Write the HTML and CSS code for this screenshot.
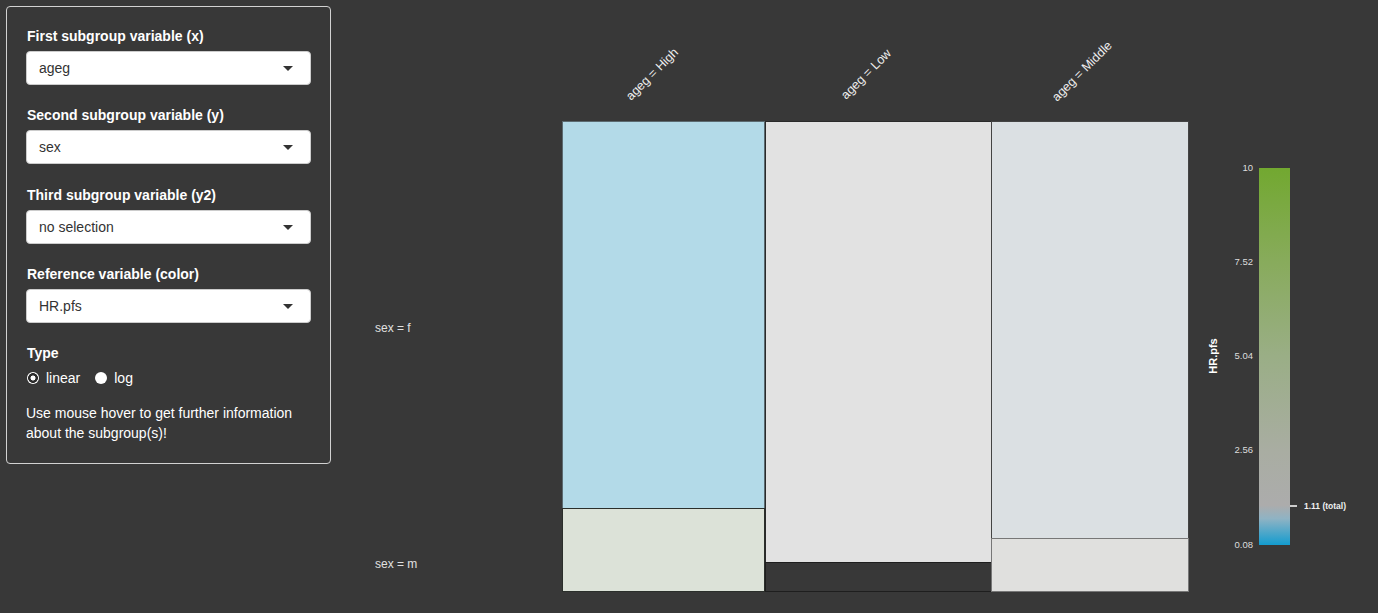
FILE: index.html
```html
<!DOCTYPE html>
<html>
<head>
<meta charset="utf-8">
<link rel="stylesheet" href="styles.css">
</head>
<body>
<div class="page">
  <aside class="panel">
    <div class="group">
      <div class="label">First subgroup variable (x)</div>
      <div class="select"><span>ageg</span><i class="caret"></i></div>
    </div>
    <div class="group group-wide">
      <div class="label">Second subgroup variable (y)</div>
      <div class="select"><span>sex</span><i class="caret"></i></div>
    </div>
    <div class="group">
      <div class="label">Third subgroup variable (y2)</div>
      <div class="select"><span>no selection</span><i class="caret"></i></div>
    </div>
    <div class="group">
      <div class="label">Reference variable (color)</div>
      <div class="select"><span>HR.pfs</span><i class="caret"></i></div>
    </div>
    <div class="group group-last">
      <div class="label">Type</div>
      <div class="radios">
        <label class="radio"><span class="dot checked"></span>linear</label>
        <label class="radio"><span class="dot"></span>log</label>
      </div>
    </div>
    <p class="help">Use mouse hover to get further information about the subgroup(s)!</p>
  </aside>
  <main class="plot">
    <svg class="chart" width="1040" height="613" viewBox="338 0 1040 613" xmlns="http://www.w3.org/2000/svg">
      <defs>
        <linearGradient id="lg" x1="0" y1="0" x2="0" y2="1">
          <stop offset="0" stop-color="#72a830"/>
          <stop offset="0.25" stop-color="#88ab5c"/>
          <stop offset="0.5" stop-color="#9aae86"/>
          <stop offset="0.75" stop-color="#a9ada2"/>
          <stop offset="0.895" stop-color="#acacac"/>
          <stop offset="0.93" stop-color="#8fb3c4"/>
          <stop offset="1" stop-color="#139ccf"/>
        </linearGradient>
      </defs>
      <g class="collab">
        <text x="631" y="101" transform="rotate(-45 631 101)">ageg = High</text>
        <text x="846" y="100" transform="rotate(-45 846 100)">ageg = Low</text>
        <text x="1057" y="102" transform="rotate(-45 1057 102)">ageg = Middle</text>
      </g>
      <g class="rowlab">
        <text x="375" y="332">sex = f</text>
        <text x="375" y="568">sex = m</text>
      </g>
      <g class="tiles" shape-rendering="crispEdges">
        <rect x="562.5" y="121.5" width="202" height="386.5" fill="#b3dae8" stroke="#5b6a70"/>
        <rect x="562.5" y="508" width="202" height="83" fill="#dce2d8" stroke="#2b2f2b"/>
        <rect x="765" y="121.5" width="226" height="440.5" fill="#e2e2e2" stroke="#2a2a2a"/>
        <rect x="765" y="562" width="226" height="29" fill="#383838" stroke="#1e1e1e"/>
        <rect x="991" y="121.5" width="197" height="417" fill="#dbe0e3" stroke="#444"/>
        <rect x="991" y="538.5" width="197" height="52.5" fill="#e0e0de" stroke="#777"/>
      </g>
      <rect x="1259" y="168" width="31" height="377" fill="url(#lg)"/>
      <g class="ticks">
        <text x="1253" y="171">10</text>
        <text x="1253" y="265">7.52</text>
        <text x="1253" y="359">5.04</text>
        <text x="1253" y="453">2.56</text>
        <text x="1253" y="548">0.08</text>
      </g>
      <text class="ltitle" x="1217" y="356" transform="rotate(-90 1217 356)">HR.pfs</text>
      <line x1="1290" y1="506" x2="1297" y2="506" stroke="#fff" stroke-width="1.5"/>
      <text class="marker" x="1304" y="509">1.11 (total)</text>
    </svg>
  </main>
</div>
</body>
</html>
```

FILE: styles.css
```css
html, body {
  margin: 0;
  padding: 0;
  background: #383838;
}
body {
  font-family: "Liberation Sans", Arial, sans-serif;
  font-size: 14px;
  line-height: 20px;
  color: #fff;
  overflow: hidden;
}
.page {
  display: flex;
  align-items: flex-start;
  padding: 6px 0 0 6px;
  gap: 7px;
  height: 607px;
}
.panel {
  box-sizing: border-box;
  width: 325px;
  height: 458px;
  border: 1px solid #d2d2d2;
  border-radius: 4px;
  padding: 19px;
  display: flex;
  flex-direction: column;
}
.group {
  display: flex;
  flex-direction: column;
  gap: 5px;
  margin-bottom: 20px;
}
.group-wide {
  margin-bottom: 21px;
}
.group-last {
  margin-bottom: 15px;
}
.label {
  font-weight: bold;
  height: 20px;
  padding-left: 1px;
}
.select {
  box-sizing: border-box;
  height: 34px;
  background: #fff;
  border: 1px solid #ccc;
  border-radius: 4px;
  display: flex;
  align-items: center;
  justify-content: space-between;
  padding: 0 17px 0 12px;
  color: #333;
}
.caret {
  width: 0;
  height: 0;
  border-left: 5px solid transparent;
  border-right: 5px solid transparent;
  border-top: 5px solid #333;
}
.radios {
  display: flex;
  gap: 14px;
  height: 20px;
  align-items: center;
}
.radio {
  display: flex;
  align-items: center;
  gap: 7px;
}
.dot {
  box-sizing: border-box;
  width: 12px;
  height: 12px;
  border-radius: 50%;
  background: #fff;
  margin-left: 1px;
}
.dot.checked {
  background: radial-gradient(circle, #fff 0 2.2px, #2b2b2b 2.8px 4.6px, #fff 5.2px);
}
.help {
  margin: 0;
}
.plot {
  flex: none;
  margin-top: -6px;
}
.chart {
  display: block;
  font-family: "Liberation Sans", Arial, sans-serif;
}
.collab text {
  font-size: 12.5px;
  fill: #eee;
}
.rowlab text {
  font-size: 12px;
  fill: #e0e0e0;
}
.ticks text {
  font-size: 9.5px;
  fill: #ddd;
  text-anchor: end;
}
.ltitle {
  font-size: 11px;
  font-weight: bold;
  fill: #fff;
  text-anchor: middle;
}
.marker {
  font-size: 8.5px;
  font-weight: bold;
  fill: #f0f0f0;
}
```
